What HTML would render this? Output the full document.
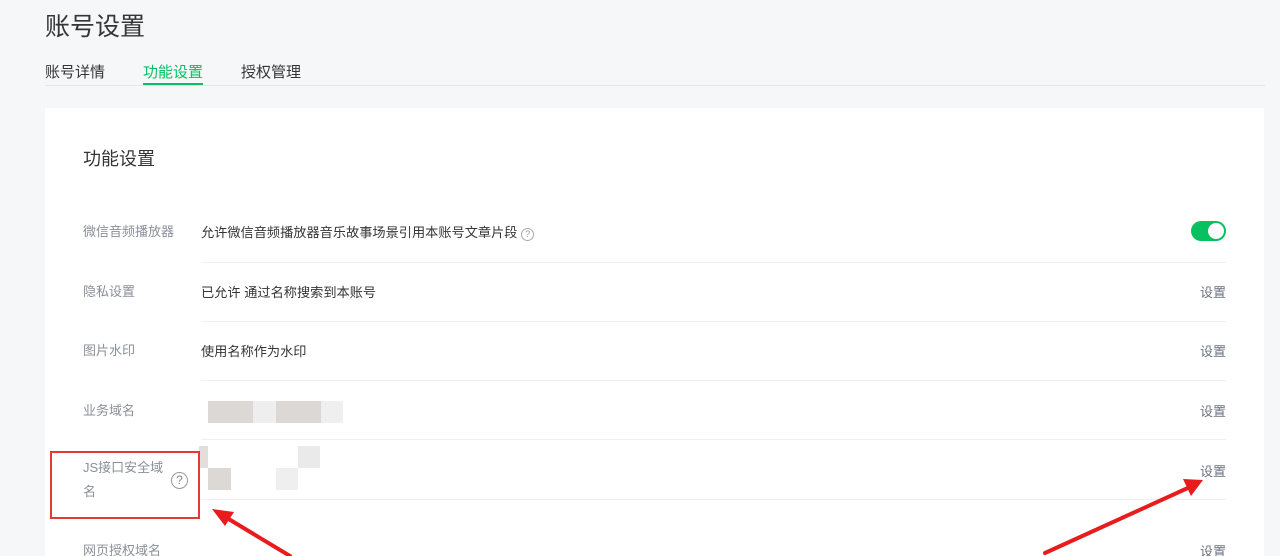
<!DOCTYPE html>
<html><head><meta charset="utf-8"><style>
html,body{margin:0;width:1280px;height:556px;overflow:hidden}
body{background:#f6f7f9;font-family:"Liberation Sans","Noto Sans CJK SC",sans-serif;position:relative}
.t{position:absolute;left:45px;top:7px;font-size:25px;color:#353535}
.tab{position:absolute;top:61px;font-size:15px;color:#353535}
.line{position:absolute;left:45px;top:85px;width:1220px;height:1px;background:#e4e6eb}
.card{position:absolute;left:45px;top:108px;width:1219px;height:448px;background:#fff}
.h{position:absolute;left:83px;top:145px;font-size:18px;color:#353535}
.lab{position:absolute;left:83px;font-size:13px;color:#8a8f99;line-height:24px}
.val{position:absolute;left:201px;font-size:13.2px;color:#353535}
.set{position:absolute;left:1200px;font-size:13px;color:#6b7280}
.div{position:absolute;left:201px;width:1025px;height:1px;background:#eef0f3}
.b{position:absolute}
</style></head><body>
<div class="t">账号设置</div>
<div class="tab" style="left:45px">账号详情</div>
<div class="tab" style="left:143px;color:#07c160">功能设置</div>
<div class="b" style="left:143px;top:83px;width:60px;height:3px;background:#07c160"></div>
<div class="tab" style="left:241px">授权管理</div>
<div class="line"></div>
<div class="card"></div>
<div class="h">功能设置</div>

<div class="lab" style="top:220px">微信音频播放器</div>
<div class="val" style="top:222px">允许微信音频播放器音乐故事场景引用本账号文章片段 <span style="display:inline-block;width:11px;height:11px;border:1px solid #aaa;border-radius:50%;font-size:9px;line-height:11px;text-align:center;color:#999;vertical-align:0px">?</span></div>
<div class="b" style="left:1191px;top:221px;width:35px;height:20px;border-radius:10px;background:#07c160"></div>
<div class="b" style="left:1208px;top:223px;width:16px;height:16px;border-radius:50%;background:#fff"></div>
<div class="div" style="top:262px"></div>

<div class="lab" style="top:280px">隐私设置</div>
<div class="val" style="top:282px">已允许 通过名称搜索到本账号</div>
<div class="set" style="top:282px">设置</div>
<div class="div" style="top:321px"></div>

<div class="lab" style="top:339px">图片水印</div>
<div class="val" style="top:341px">使用名称作为水印</div>
<div class="set" style="top:341px">设置</div>
<div class="div" style="top:380px"></div>

<div class="lab" style="top:399px">业务域名</div>
<div class="b" style="left:208px;top:401px;width:45px;height:22px;background:#dcd8d6"></div>
<div class="b" style="left:253px;top:401px;width:23px;height:22px;background:#eeeeee"></div>
<div class="b" style="left:276px;top:401px;width:45px;height:22px;background:#dcd8d6"></div>
<div class="b" style="left:321px;top:401px;width:22px;height:22px;background:#efefef"></div>
<div class="set" style="top:401px">设置</div>
<div class="div" style="top:439px"></div>

<div class="lab" style="top:456px;width:86px">JS接口安全域名</div>
<div class="b" style="left:171px;top:472px;width:15px;height:15px;border:1px solid #999;border-radius:50%;font-size:12px;line-height:15px;text-align:center;color:#888">?</div>
<div class="b" style="left:199px;top:446px;width:9px;height:22px;background:#e2dedc"></div>
<div class="b" style="left:208px;top:468px;width:23px;height:22px;background:#dcd8d6"></div>
<div class="b" style="left:298px;top:446px;width:22px;height:22px;background:#eaeaea"></div>
<div class="b" style="left:276px;top:468px;width:22px;height:22px;background:#efefef"></div>
<div class="set" style="top:461px">设置</div>
<div class="div" style="top:499px"></div>
<div class="b" style="left:50px;top:451px;width:146px;height:64px;border:2px solid #e53935"></div>

<div class="lab" style="top:539px">网页授权域名</div>
<div class="set" style="top:541px">设置</div>

<svg class="b" style="left:0;top:0" width="1280" height="556">
<g stroke="#e81c1c" stroke-width="4" stroke-linecap="round"><line x1="290" y1="556" x2="222" y2="515"/><line x1="1045" y1="553" x2="1190" y2="487"/></g>
<polygon points="212,509 234,512 225,526" fill="#e81c1c"/>
<polygon points="1203,480 1183,479 1191,496" fill="#e81c1c"/>
</svg>
</body></html>
